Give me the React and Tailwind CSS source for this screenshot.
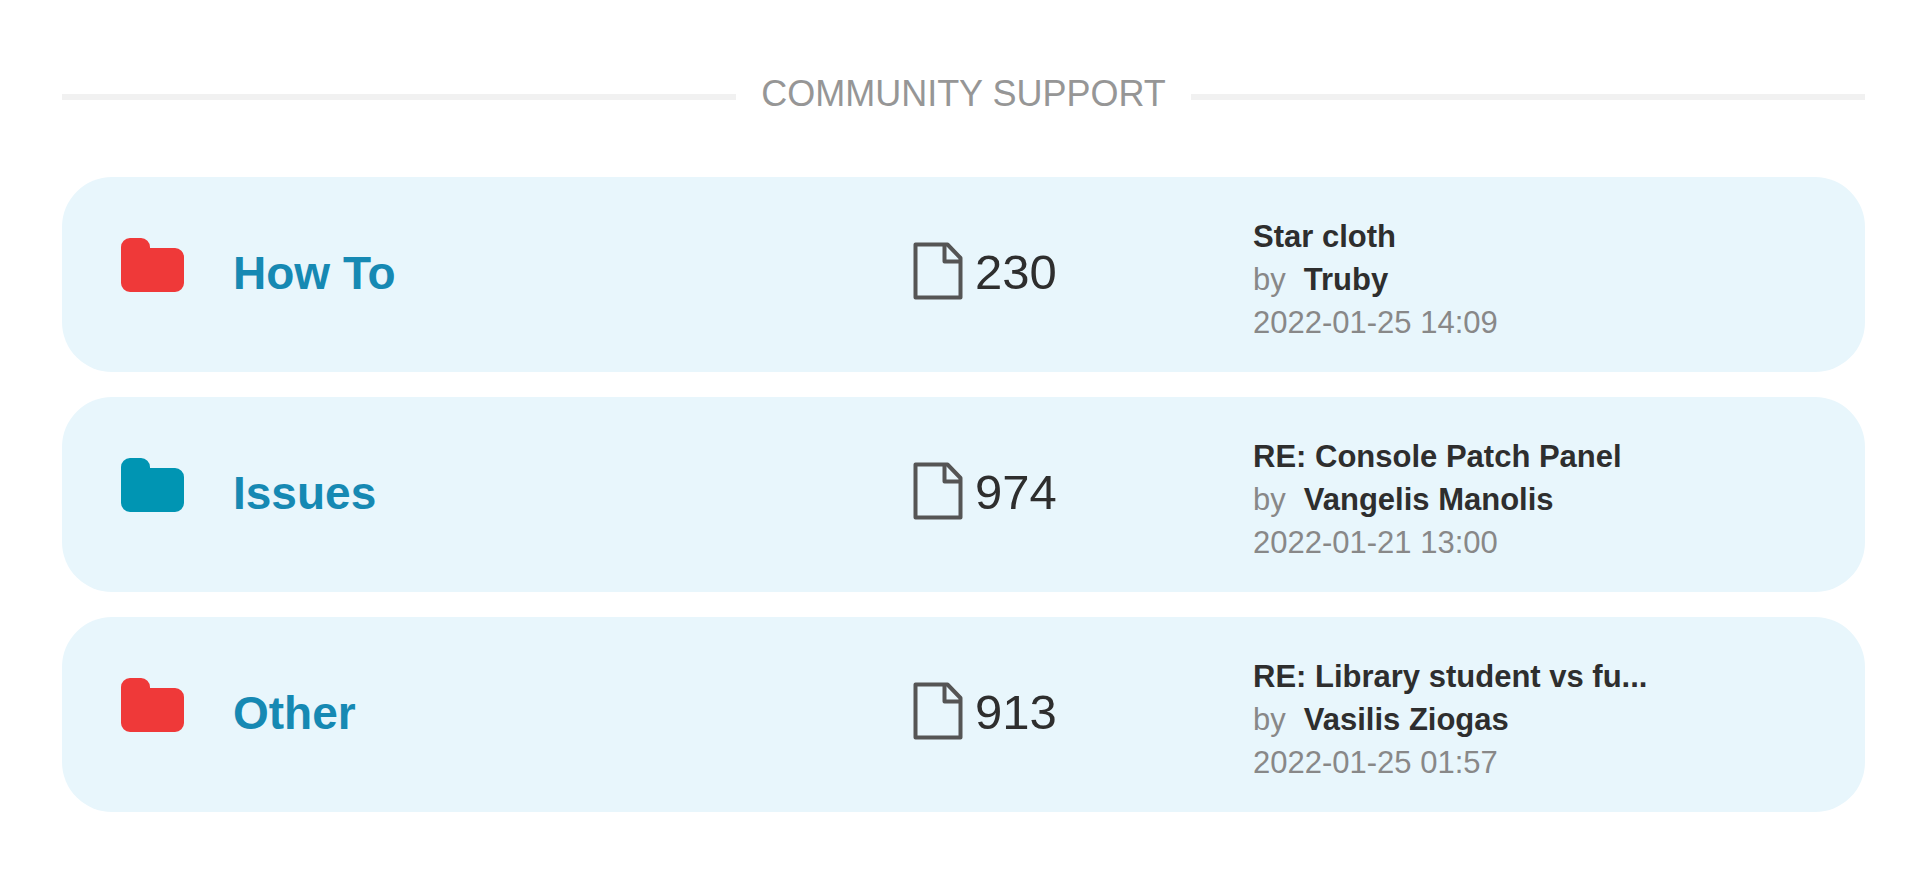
const forums = [
  {
    name: "How To",
    unread: true,
    topics: 230,
    post: "Star cloth",
    author: "Truby",
    date: "2022-01-25 14:09",
  },
  {
    name: "Issues",
    unread: false,
    topics: 974,
    post: "RE: Console Patch Panel",
    author: "Vangelis Manolis",
    date: "2022-01-21 13:00",
  },
  {
    name: "Other",
    unread: true,
    topics: 913,
    post: "RE: Library student vs fu...",
    author: "Vasilis Ziogas",
    date: "2022-01-25 01:57",
  },
];

const FolderIcon = ({ className }) => (
  <svg viewBox="0 0 64 54" className={className} fill="currentColor" aria-hidden="true">
    <path d="M9 0h11a9 9 0 0 1 9 9v1h25a9 9 0 0 1 9 9v26a9 9 0 0 1-9 9H9a9 9 0 0 1-9-9V9a9 9 0 0 1 9-9z" />
  </svg>
);

const DocumentIcon = ({ className }) => (
  <svg
    viewBox="0 0 50 58"
    className={className}
    fill="none"
    stroke="currentColor"
    strokeWidth="4"
    strokeLinejoin="round"
    aria-hidden="true"
  >
    <path d="M2.5 2.5h32l13 13.5v39.5h-45z" />
    <path d="M31.5 2.5v17h16" />
  </svg>
);

const ForumRow = ({ forum }) => (
  <li className="grid grid-cols-[112px_10fr_5fr_9fr] items-center rounded-[50px] bg-[#e8f6fc] py-7 pl-[59px]">
    <div className="pb-5">
      <FolderIcon
        className={`h-[54px] w-16 ${forum.unread ? "text-[#ef3939]" : "text-[#0095b3]"}`}
      />
    </div>

    <h3 className="pb-1 text-[46px] leading-none font-bold text-[#1689b3]">
      <a href="#">{forum.name}</a>
    </h3>

    <div className="flex items-center gap-3 pb-1 text-[49px] leading-none text-[#2e2e2e]">
      <DocumentIcon className="mb-1 h-[58px] w-[50px] text-[#555]" />
      <span>{forum.topics}</span>
    </div>

    {/* Last post */}
    <div className="min-w-0 pt-[10px] text-[31px] leading-[43px] text-[#888]">
      <a href="#" className="block truncate font-bold text-[#2e2e2e]">
        {forum.post}
      </a>
      <p className="flex gap-[18px]">
        by
        <a href="#" className="font-bold text-[#2e2e2e]">
          {forum.author}
        </a>
      </p>
      <p>{forum.date}</p>
    </div>
  </li>
);

const App = () => {
  return (
    <main className="min-h-screen bg-white pt-[70px] pr-[55px] pb-10 pl-[62px] font-['Liberation_Sans',Arial,sans-serif]">
      <div className="mb-[53px] flex items-center gap-[25px]">
        <div className="h-[6px] flex-1 bg-[#f1f1f1]" />
        <h2 className="pb-[6px] text-4xl leading-[48px] text-[#969696] uppercase">
          Community Support
        </h2>
        <div className="h-[6px] flex-1 bg-[#f1f1f1]" />
      </div>

      <ul className="space-y-[25px]">
        {forums.map((forum) => (
          <ForumRow key={forum.name} forum={forum} />
        ))}
      </ul>
    </main>
  );
};

export default App;
